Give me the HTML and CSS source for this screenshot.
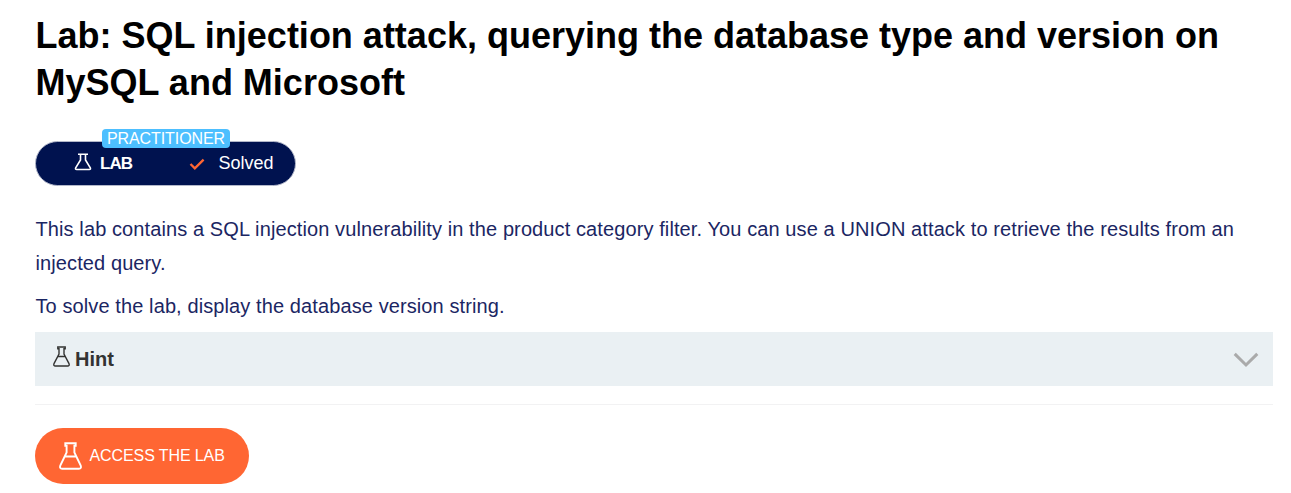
FILE: index.html
```html
<!DOCTYPE html>
<html lang="en">
<head>
<meta charset="utf-8">
<title>Lab: SQL injection attack</title>
<link rel="stylesheet" href="styles.css">
</head>
<body>
<main class="page">
  <h1 class="title">Lab: SQL injection attack, querying the database type and version on MySQL and Microsoft</h1>
  <div class="status">
    <span class="level">PRACTITIONER</span>
    <svg class="status-flask" width="18" height="18" viewBox="0 0 18 18"><path d="M4 1.200h10M6.500 1.500v5.500L1.700 14.800q-.7 1.700 1 1.700h12.600q1.700 0 1-1.700L11.500 7V1.500"/></svg>
    <b class="status-lab">LAB</b>
    <svg class="status-check" width="16" height="12" viewBox="0 0 16 12"><path d="M1.500 6l4.300 4.300L14.600 1.600"/></svg>
    <span class="status-text">Solved</span>
  </div>
  <p class="text">This lab contains a SQL injection vulnerability in the product category filter. You can use a UNION attack to retrieve the results from an injected query.</p>
  <p class="text">To solve the lab, display the database version string.</p>
  <div class="hint">
    <svg class="hint-flask" width="17" height="21" viewBox="0 0 17 21"><path d="M4.800 1h7.400v1.800H11v5.400l5 9.400q.8 2.400-1.400 2.400H2.400Q.2 20 1 17.600l5-9.400V2.800H4.800zM5 10.500h7"/></svg>
    <b class="hint-label">Hint</b>
    <svg class="chevron" width="26" height="16" viewBox="0 0 26 16"><path d="M1.700 1.900L13 13l11.300-11.100"/></svg>
  </div>
  <hr class="rule">
  <a class="access">
    <svg class="access-flask" width="23" height="28" viewBox="0 0 23 28"><path d="M6.300 1.200h10.400v2.600h-1.300V10.500l6.200 12.800q1.200 3.400-1.700 3.400H3.100q-2.900 0-1.700-3.400L7.600 10.500V3.800H6.300zM6 14.500h11"/></svg>
    <span class="access-label">ACCESS THE LAB</span>
  </a>
</main>
</body>
</html>
```
FILE: styles.css
```css
body {
  margin: 0;
  background: #fff;
  font-family: "Liberation Sans", Arial, sans-serif;
}
svg {
  display: block;
  flex: none;
  fill: none;
  stroke: currentColor;
}
.page {
  padding: 12px 18px 0 35px;
}
.title {
  margin: 0;
  padding-left: 0.5px;
  font-size: 36px;
  line-height: 47px;
  color: #000;
}
.status {
  position: relative;
  display: flex;
  align-items: center;
  box-sizing: border-box;
  width: 261px;
  height: 45px;
  margin-top: 35px;
  padding-left: 38px;
  border: 1px solid #b3b8ca;
  border-radius: 23px;
  background: #00124f;
  color: #fff;
  font-size: 18px;
}
.level {
  position: absolute;
  left: 66px;
  top: -13px;
  width: 128px;
  height: 19px;
  border-radius: 4px;
  background: #4dbfff;
  font-size: 16px;
  line-height: 20px;
  letter-spacing: -0.08px;
  text-align: center;
}
.status-flask {
  margin-top: -3px;
  stroke-width: 1.6;
}
.status-lab {
  width: 89px;
  margin-left: 8px;
  font-size: 17px;
  letter-spacing: -0.9px;
}
.status-check {
  margin-top: 1px;
  color: #ff6633;
  stroke-width: 2.3;
}
.status-text {
  margin-left: 13.5px;
}
.text {
  margin: 0 0 9px;
  padding-left: 0.5px;
  font-size: 20px;
  line-height: 34px;
  letter-spacing: 0.103px;
  color: #1b2663;
}
.status + .text {
  margin-top: 26px;
}
.hint {
  display: flex;
  align-items: center;
  height: 54px;
  padding: 0 14px 0 18px;
  background: #eaf0f3;
  color: #333332;
}
.hint-flask {
  margin-top: -6px;
  stroke-width: 1.4;
}
.hint-label {
  margin-left: 5px;
  font-size: 20px;
}
.chevron {
  margin: 2px 0 0 auto;
  color: #aaa;
  stroke-width: 3;
}
.rule {
  height: 1px;
  margin: 18px 0 23px;
  border: 0;
  background: #f2f2f3;
}
.access {
  display: flex;
  align-items: center;
  box-sizing: border-box;
  width: 214px;
  height: 56px;
  padding-left: 24px;
  gap: 7px;
  border-radius: 28px;
  background: #ff6633;
  color: #fff;
  font-size: 16px;
  white-space: nowrap;
}
.access-flask {
  margin-top: -1px;
  stroke-width: 1.9;
}
.access-label {
  margin-left: 0.5px;
  letter-spacing: -0.1px;
}
```
